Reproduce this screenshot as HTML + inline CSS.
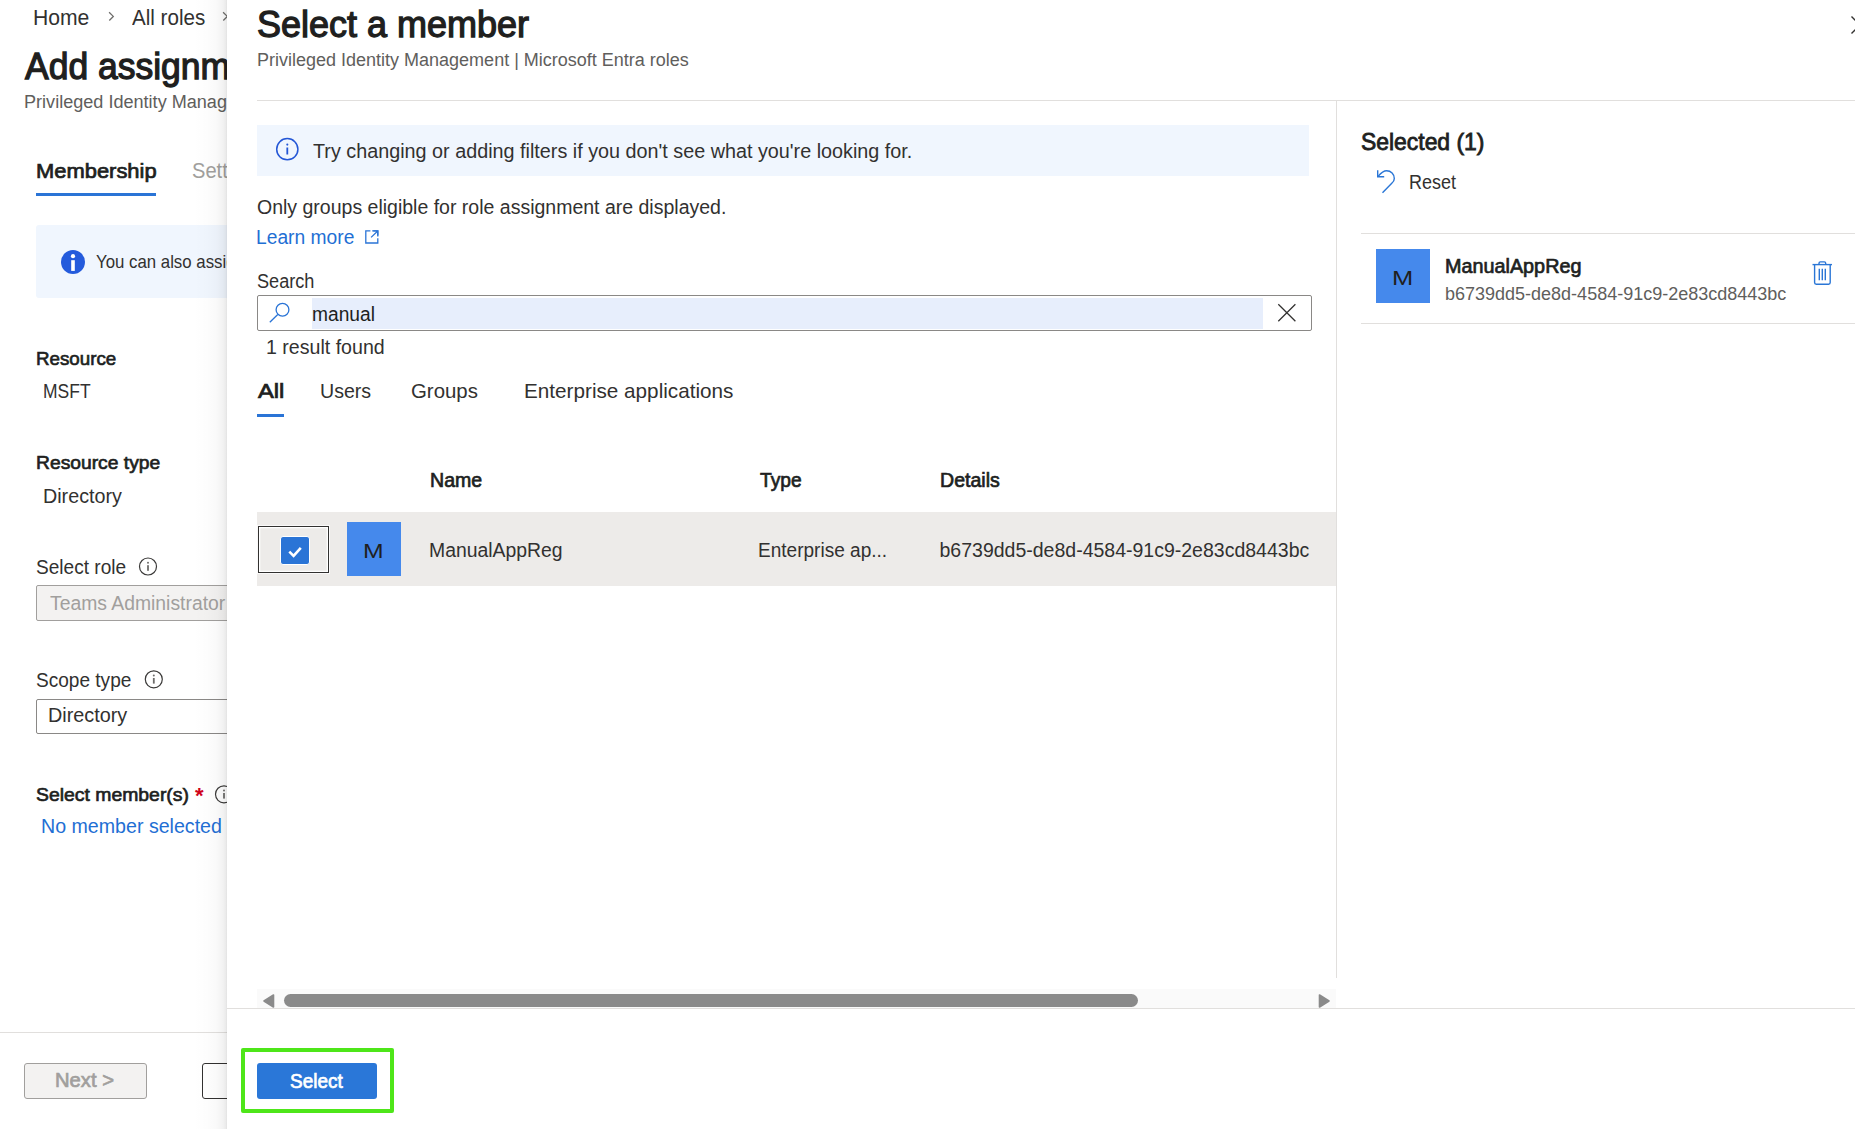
<!DOCTYPE html>
<html><head><meta charset="utf-8">
<style>
html,body{margin:0;padding:0;}
body{width:1855px;height:1129px;position:relative;overflow:hidden;background:#fff;font-family:"Liberation Sans",sans-serif;}
.t{position:absolute;white-space:pre;transform-origin:0 0;}
.abs{position:absolute;}
svg{position:absolute;overflow:visible;}
</style></head><body>
<!-- ===== background page ===== -->
<div id="page" class="abs" style="left:0;top:0;width:1855px;height:1129px;">
<svg style="left:0;top:0" width="1855" height="1129" viewBox="0 0 1855 1129">
  <path d="M109.1 12.3 L113.3 16.4 L109.3 20.5" fill="none" stroke="#6e6d6b" stroke-width="1.3"/>
  <path d="M223.1 12.3 L227.3 16.4 L223.3 20.5" fill="none" stroke="#6e6d6b" stroke-width="1.3"/>
</svg>
<div class="abs" style="left:36px;top:193px;width:120px;height:3px;background:#2a74d6;"></div>
<div class="abs" style="left:36px;top:225px;width:300px;height:73px;background:#f0f6fe;border-radius:3px;"></div>
<svg style="left:0;top:0" width="400" height="1129" viewBox="0 0 400 1129">
  <circle cx="73" cy="262" r="12" fill="#245bdc"/>
  <rect x="71.2" y="260.2" width="3.6" height="10.7" fill="#fff"/>
  <circle cx="73" cy="256.2" r="2.1" fill="#fff"/>
  <circle cx="148" cy="566.5" r="8.5" fill="none" stroke="#3b3a39" stroke-width="1.2"/>
  <rect x="147.1" y="565.2" width="1.8" height="5.6" fill="#6e6d6b"/>
  <circle cx="148" cy="562.7" r="1" fill="#6e6d6b"/>
  <circle cx="153.8" cy="679.3" r="8.5" fill="none" stroke="#3b3a39" stroke-width="1.2"/>
  <rect x="152.9" y="678" width="1.8" height="5.6" fill="#6e6d6b"/>
  <circle cx="153.8" cy="675.5" r="1" fill="#6e6d6b"/>
  <circle cx="224" cy="794.3" r="8.5" fill="none" stroke="#3b3a39" stroke-width="1.2"/>
  <rect x="223.1" y="793" width="1.8" height="5.6" fill="#6e6d6b"/>
  <circle cx="224" cy="790.5" r="1" fill="#6e6d6b"/>
</svg>
<div class="abs" style="left:36px;top:585px;width:300px;height:34px;background:#f3f2f1;border:1px solid #a19f9d;border-radius:2px;"></div>
<div class="abs" style="left:36px;top:699px;width:300px;height:33px;background:#fff;border:1px solid #8a8886;border-radius:2px;"></div>
<div class="abs" style="left:0;top:1032px;width:260px;height:1px;background:#e1dfdd;"></div>
<div class="abs" style="left:24px;top:1063px;width:121px;height:34px;background:#f3f2f1;border:1px solid #a19f9d;border-radius:3px;"></div>
<div class="abs" style="left:202px;top:1063px;width:120px;height:36px;box-sizing:border-box;background:#fff;border:1.5px solid #323130;border-radius:3px;"></div>
<div class='t' style='left:32.78px;top:6.70px;font-size:22px;line-height:22px;font-weight:400;color:#323130;transform:scaleX(0.9607);'>Home</div>
<div class='t' style='left:132.00px;top:6.70px;font-size:22px;line-height:22px;font-weight:400;color:#323130;transform:scaleX(0.9359);'>All roles</div>
<div class='t' style='left:25.49px;top:48.70px;font-size:36px;line-height:36px;font-weight:400;-webkit-text-stroke:1.26px #201f1e;color:#201f1e;transform:scaleX(0.9854);'>Add assignments</div>
<div class='t' style='left:24.00px;top:92.60px;font-size:18px;line-height:18px;font-weight:400;color:#605e5c;transform:scaleX(1.0043);'>Privileged Identity Management | Microsoft Entra roles</div>
<div class='t' style='left:35.96px;top:159.60px;font-size:21px;line-height:21px;font-weight:400;-webkit-text-stroke:0.74px #201f1e;color:#201f1e;transform:scaleX(1.0439);'>Membership</div>
<div class='t' style='left:191.89px;top:160.00px;font-size:22px;line-height:22px;font-weight:400;color:#a19f9d;transform:scaleX(0.9132);'>Settings</div>
<div class='t' style='left:96.32px;top:252.00px;font-size:19px;line-height:19px;font-weight:400;color:#323130;transform:scaleX(0.8845);'>You can also assign roles to groups</div>
<div class='t' style='left:36.01px;top:349.00px;font-size:19px;line-height:19px;font-weight:400;-webkit-text-stroke:0.67px #201f1e;color:#201f1e;transform:scaleX(0.9875);'>Resource</div>
<div class='t' style='left:43.21px;top:382.00px;font-size:19.5px;line-height:19.5px;font-weight:400;color:#323130;transform:scaleX(0.8961);'>MSFT</div>
<div class='t' style='left:35.99px;top:452.80px;font-size:19px;line-height:19px;font-weight:400;-webkit-text-stroke:0.67px #201f1e;color:#201f1e;transform:scaleX(1.0140);'>Resource type</div>
<div class='t' style='left:42.98px;top:486.50px;font-size:19.5px;line-height:19.5px;font-weight:400;color:#323130;transform:scaleX(1.0105);'>Directory</div>
<div class='t' style='left:36.02px;top:557.70px;font-size:19.5px;line-height:19.5px;font-weight:400;color:#323130;transform:scaleX(0.9778);'>Select role</div>
<div class='t' style='left:50.00px;top:593.70px;font-size:19.5px;line-height:19.5px;font-weight:400;color:#a19f9d;transform:scaleX(0.9921);'>Teams Administrator</div>
<div class='t' style='left:36.02px;top:670.80px;font-size:19.5px;line-height:19.5px;font-weight:400;color:#323130;transform:scaleX(0.9771);'>Scope type</div>
<div class='t' style='left:47.97px;top:706.00px;font-size:19.5px;line-height:19.5px;font-weight:400;color:#323130;transform:scaleX(1.0158);'>Directory</div>
<div class='t' style='left:35.98px;top:784.60px;font-size:19px;line-height:19px;font-weight:400;-webkit-text-stroke:0.67px #201f1e;color:#201f1e;transform:scaleX(1.0203);'>Select member(s)</div>
<div class='t' style='left:195.00px;top:784.60px;font-size:22px;line-height:22px;font-weight:700;color:#d0021b;'>*</div>
<div class='t' style='left:40.99px;top:816.50px;font-size:19.5px;line-height:19.5px;font-weight:400;color:#1f6fd4;transform:scaleX(1.0056);'>No member selected</div>
<div class='t' style='left:54.96px;top:1071.00px;font-size:19.5px;line-height:19.5px;font-weight:400;-webkit-text-stroke:0.68px #a19f9d;color:#a19f9d;transform:scaleX(1.0357);'>Next &gt;</div>
</div>
<!-- shadow -->
<div class="abs" style="left:193px;top:0;width:34px;height:1129px;background:linear-gradient(to right,rgba(0,0,0,0) 0%,rgba(0,0,0,0.008) 40%,rgba(0,0,0,0.025) 70%,rgba(0,0,0,0.05) 88%,rgba(0,0,0,0.08) 96%,rgba(0,0,0,0.115) 100%);"></div>
<!-- ===== panel ===== -->
<div id="panel" class="abs" style="left:227px;top:0;width:1628px;height:1129px;background:#fff;"></div>
<div class="abs" style="left:257px;top:100px;width:1598px;height:1px;background:#e1dfdd;"></div>
<div class="abs" style="left:1336px;top:101px;width:1px;height:877px;background:#e1dfdd;"></div>
<div class="abs" style="left:257px;top:125px;width:1052px;height:51px;background:#f0f6fe;"></div>
<div class="abs" style="left:257px;top:295px;width:1053px;height:34px;border:1px solid #8a8886;border-radius:2px;"></div>
<div class="abs" style="left:312px;top:298px;width:951px;height:31px;background:#e7eefc;"></div>
<div class="abs" style="left:257px;top:414px;width:27px;height:3px;background:#2a74d6;"></div>
<div class="abs" style="left:257px;top:512px;width:1079px;height:74px;background:#edebe9;"></div>
<div class="abs" style="left:258px;top:526px;width:68px;height:44px;border:1.6px solid #323130;box-shadow:inset 0 0 0 1.3px #fff,0 0 0 1px rgba(255,255,255,.7);width:69px;height:45px;"></div>
<div class="abs" style="left:280px;top:536px;width:28px;height:27px;background:#2a74d6;border:1px solid #fff;border-radius:3px;"></div>
<div class="abs" style="left:347px;top:522px;width:54px;height:54px;background:#4589ec;"></div>
<div class="abs" style="left:257px;top:989px;width:1079px;height:19px;background:#fafafa;"></div>
<div class="abs" style="left:284px;top:994px;width:854px;height:13px;background:#8a8a8a;border-radius:7px;"></div>
<div class="abs" style="left:227px;top:1008px;width:1628px;height:1px;background:#e1dfdd;"></div>
<div class="abs" style="left:257px;top:1063px;width:120px;height:36px;background:#2a77d8;border-radius:3px;"></div>
<div class="abs" style="left:241px;top:1048px;width:145px;height:57px;border:4px solid #4ee619;border-radius:2px;"></div>
<div class="abs" style="left:1361px;top:233px;width:494px;height:1px;background:#e1dfdd;"></div>
<div class="abs" style="left:1376px;top:249px;width:54px;height:54px;background:#4589ec;"></div>
<div class="abs" style="left:1361px;top:323px;width:494px;height:1px;background:#e1dfdd;"></div>
<svg style="left:0;top:0" width="1855" height="1129" viewBox="0 0 1855 1129">
  <!-- close X -->
  <path d="M1851.5 16.5 L1868.5 33.5 M1868.5 16.5 L1851.5 33.5" stroke="#323130" stroke-width="1.4" fill="none"/>
  <!-- info outline -->
  <circle cx="287.3" cy="149.2" r="10.6" fill="none" stroke="#2457d6" stroke-width="1.5"/>
  <path d="M287.3 147.5 V154.5" stroke="#2457d6" stroke-width="1.8"/>
  <circle cx="287.3" cy="144.6" r="1.05" fill="#2457d6"/>
  <!-- external link -->
  <path d="M370.4 230.9 H365.8 V243 H377.8 V238.2 M377.8 236.5 V230.9 H372.2" fill="none" stroke="#2a74d6" stroke-width="1.3"/>
  <path d="M371.1 237.4 L377.2 231.5 M373.3 230.9 H377.8 V235.4" fill="none" stroke="#2a74d6" stroke-width="1.3"/>
  <!-- search icon -->
  <circle cx="282.5" cy="309.7" r="6.4" fill="none" stroke="#2a74d6" stroke-width="1.3"/>
  <path d="M277.8 314.5 L269.8 322.3" stroke="#2a74d6" stroke-width="1.3"/>
  <!-- clear X -->
  <path d="M1278.3 304.2 L1295.4 321.3 M1295.4 304.2 L1278.3 321.3" stroke="#323130" stroke-width="1.25" fill="none"/>
  <!-- check -->
  <path d="M289.3 551.6 L293.6 555.9 L300.8 547.9" fill="none" stroke="#fff" stroke-width="2.6"/>
  <!-- scroll arrows -->
  <path d="M273.5 995 L273.5 1007 L264 1001 Z" fill="#8a8a8a" stroke="#8a8a8a" stroke-width="1.6" stroke-linejoin="round"/>
  <path d="M1319.5 995 L1319.5 1007 L1329 1001 Z" fill="#8a8a8a" stroke="#8a8a8a" stroke-width="1.6" stroke-linejoin="round"/>
  <!-- reset icon -->
  <g transform="translate(1366 160)" fill="none" stroke="#2a76d6" stroke-width="1.4">
    <path d="M11.7 10.3 V16.8 H18.2"/>
    <path d="M12.1 16.4 C14.6 13.4 17 10.7 20.6 10.7 C25 10.7 28.3 14.1 28.3 18.4 C28.3 20.1 27.6 21.6 26 23 L16.5 32.8"/>
  </g>
  <!-- trash -->
  <g transform="translate(1802 252)" fill="none" stroke="#2a76d6" stroke-width="1.4">
    <path d="M10.5 12.6 H30"/>
    <path d="M17 12.6 V11.2 Q17 9.9 18.4 9.9 H22.3 Q23.7 9.9 23.7 11.2 V12.6"/>
    <path d="M12.6 12.6 V30.6 Q12.6 32.2 14.2 32.2 H26.6 Q28.2 32.2 28.2 30.6 V12.6"/>
    <path d="M17.3 16.7 V28.3 M20.3 16.7 V28.3 M23.3 16.7 V28.3"/>
  </g>
</svg>
<div class='t' style='left:257.00px;top:7.00px;font-size:36px;line-height:36px;font-weight:400;-webkit-text-stroke:1.26px #201f1e;color:#201f1e;'>Select a member</div>
<div class='t' style='left:257.00px;top:50.50px;font-size:18px;line-height:18px;font-weight:400;color:#605e5c;'>Privileged Identity Management | Microsoft Entra roles</div>
<div class='t' style='left:312.70px;top:141.80px;font-size:19.5px;line-height:19.5px;font-weight:400;color:#323130;transform:scaleX(1.0141);'>Try changing or adding filters if you don&#x27;t see what you&#x27;re looking for.</div>
<div class='t' style='left:257.00px;top:198.00px;font-size:19.5px;line-height:19.5px;font-weight:400;color:#323130;'>Only groups eligible for role assignment are displayed.</div>
<div class='t' style='left:256.33px;top:227.50px;font-size:19.5px;line-height:19.5px;font-weight:400;color:#1f6fd4;transform:scaleX(0.9866);'>Learn more</div>
<div class='t' style='left:257.07px;top:271.60px;font-size:19.5px;line-height:19.5px;font-weight:400;color:#323130;transform:scaleX(0.9300);'>Search</div>
<div class='t' style='left:312.02px;top:304.60px;font-size:19.5px;line-height:19.5px;font-weight:400;color:#201f1e;transform:scaleX(0.9839);'>manual</div>
<div class='t' style='left:265.50px;top:338.00px;font-size:19.5px;line-height:19.5px;font-weight:400;color:#323130;transform:scaleX(1.0043);'>1 result found</div>
<div class='t' style='left:258.00px;top:379.50px;font-size:21px;line-height:21px;font-weight:400;-webkit-text-stroke:0.74px #201f1e;color:#201f1e;transform:scaleX(1.1304);'>All</div>
<div class='t' style='left:320.43px;top:379.50px;font-size:21px;line-height:21px;font-weight:400;color:#323130;transform:scaleX(0.9327);'>Users</div>
<div class='t' style='left:411.33px;top:379.50px;font-size:21px;line-height:21px;font-weight:400;color:#323130;transform:scaleX(0.9716);'>Groups</div>
<div class='t' style='left:523.53px;top:379.50px;font-size:21px;line-height:21px;font-weight:400;color:#323130;transform:scaleX(0.9857);'>Enterprise applications</div>
<div class='t' style='left:429.80px;top:470.80px;font-size:19.5px;line-height:19.5px;font-weight:400;-webkit-text-stroke:0.68px #201f1e;color:#201f1e;transform:scaleX(1.0039);'>Name</div>
<div class='t' style='left:760.00px;top:471.00px;font-size:19.5px;line-height:19.5px;font-weight:400;-webkit-text-stroke:0.68px #201f1e;color:#201f1e;transform:scaleX(0.9857);'>Type</div>
<div class='t' style='left:939.50px;top:471.00px;font-size:19.5px;line-height:19.5px;font-weight:400;-webkit-text-stroke:0.68px #201f1e;color:#201f1e;transform:scaleX(1.0034);'>Details</div>
<div class='t' style='left:363.14px;top:540.00px;font-size:21px;line-height:21px;font-weight:400;color:#201f1e;transform:scaleX(1.1786);'>M</div>
<div class='t' style='left:428.81px;top:541.20px;font-size:19.5px;line-height:19.5px;font-weight:400;color:#323130;transform:scaleX(0.9939);'>ManualAppReg</div>
<div class='t' style='left:758.05px;top:541.20px;font-size:19.5px;line-height:19.5px;font-weight:400;color:#323130;transform:scaleX(0.9767);'>Enterprise ap...</div>
<div class='t' style='left:939.50px;top:541.20px;font-size:19.5px;line-height:19.5px;font-weight:400;color:#323130;'>b6739dd5-de8d-4584-91c9-2e83cd8443bc</div>
<div class='t' style='left:290.33px;top:1072.00px;font-size:19.5px;line-height:19.5px;font-weight:400;-webkit-text-stroke:0.68px #ffffff;color:#ffffff;transform:scaleX(0.9722);'>Select</div>
<div class='t' style='left:1360.75px;top:130.00px;font-size:24px;line-height:24px;font-weight:400;-webkit-text-stroke:0.84px #201f1e;color:#201f1e;transform:scaleX(0.9539);'>Selected (1)</div>
<div class='t' style='left:1408.96px;top:173.40px;font-size:19.5px;line-height:19.5px;font-weight:400;color:#323130;transform:scaleX(0.9224);'>Reset</div>
<div class='t' style='left:1391.57px;top:266.60px;font-size:21px;line-height:21px;font-weight:400;color:#201f1e;transform:scaleX(1.2143);'>M</div>
<div class='t' style='left:1444.98px;top:256.70px;font-size:19.5px;line-height:19.5px;font-weight:400;-webkit-text-stroke:0.68px #201f1e;color:#201f1e;transform:scaleX(1.0150);'>ManualAppReg</div>
<div class='t' style='left:1445.00px;top:285.40px;font-size:18px;line-height:18px;font-weight:400;color:#605e5c;'>b6739dd5-de8d-4584-91c9-2e83cd8443bc</div>
</body></html>
